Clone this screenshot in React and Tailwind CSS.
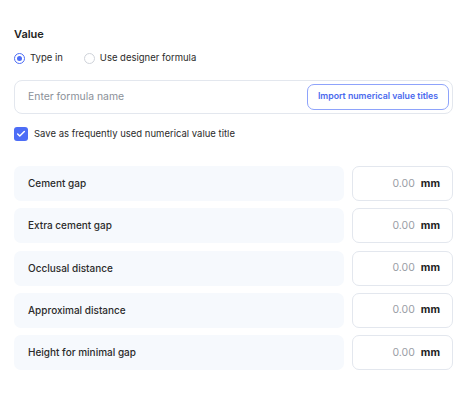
import { Check } from 'lucide-react';

const rows = [
  'Cement gap',
  'Extra cement gap',
  'Occlusal distance',
  'Approximal distance',
  'Height for minimal gap',
];

export default function App() {
  return (
    <div className="min-h-[410px] w-[467px] bg-white px-[14px] pt-[26px] font-['Inter',sans-serif] text-[#222]">
      <div className="text-[11px] font-semibold leading-4">Value</div>

      {/* radio options */}
      <div className="mt-[9px] flex h-[14px] items-center text-[9.5px] text-[#2b2b2b]">
        <span className="flex h-[11px] w-[11px] items-center justify-center rounded-full border border-[#4d6df6]">
          <span className="h-[5px] w-[5px] rounded-full bg-[#4d6df6]" />
        </span>
        <span className="ml-[5px]">Type in</span>
        <span className="ml-[21px] h-[11px] w-[11px] rounded-full border border-[#cfd3da]" />
        <span className="ml-[5px]">Use designer formula</span>
      </div>

      {/* formula input */}
      <div className="mt-[15px] flex h-[34px] items-center rounded-[8px] border border-[#e3e7ee] pl-[13px] pr-[3px]">
        <span className="flex-1 text-[10.4px] text-[#8a8f98]">Enter formula name</span>
        <button className="h-[26px] w-[142px] rounded-[7px] border border-[#8ea3fb] text-[8.75px] font-semibold text-[#4a69ee]">
          Import numerical value titles
        </button>
      </div>

      {/* checkbox */}
      <div className="mt-[13px] flex h-[14px] items-center text-[9.5px] text-[#2b2b2b]">
        <span className="flex h-[14px] w-[14px] items-center justify-center rounded-[3px] bg-[#4d6df6]">
          <Check className="h-[10px] w-[10px] text-white" strokeWidth={3.5} />
        </span>
        <span className="ml-[6px]">Save as frequently used numerical value title</span>
      </div>

      {/* value rows */}
      <div className="mt-[25px] grid grid-cols-[1fr_101px] gap-x-2 gap-y-[7.25px]">
        {rows.map((label) => (
          <div key={label} className="contents">
            <div className="flex h-[35px] items-center rounded-[7px] bg-[#f6f9fd] pl-[14px] text-[10px] font-medium text-[#2b2b2b]">
              {label}
            </div>
            <div className="flex h-[35px] items-center justify-end gap-[6px] rounded-[7px] border border-[#e3e7ee] pr-[12px] text-[10.5px]">
              <span className="text-[#9a9ea6]">0.00</span>
              <span className="font-bold text-[#222]">mm</span>
            </div>
          </div>
        ))}
      </div>
    </div>
  );
}
